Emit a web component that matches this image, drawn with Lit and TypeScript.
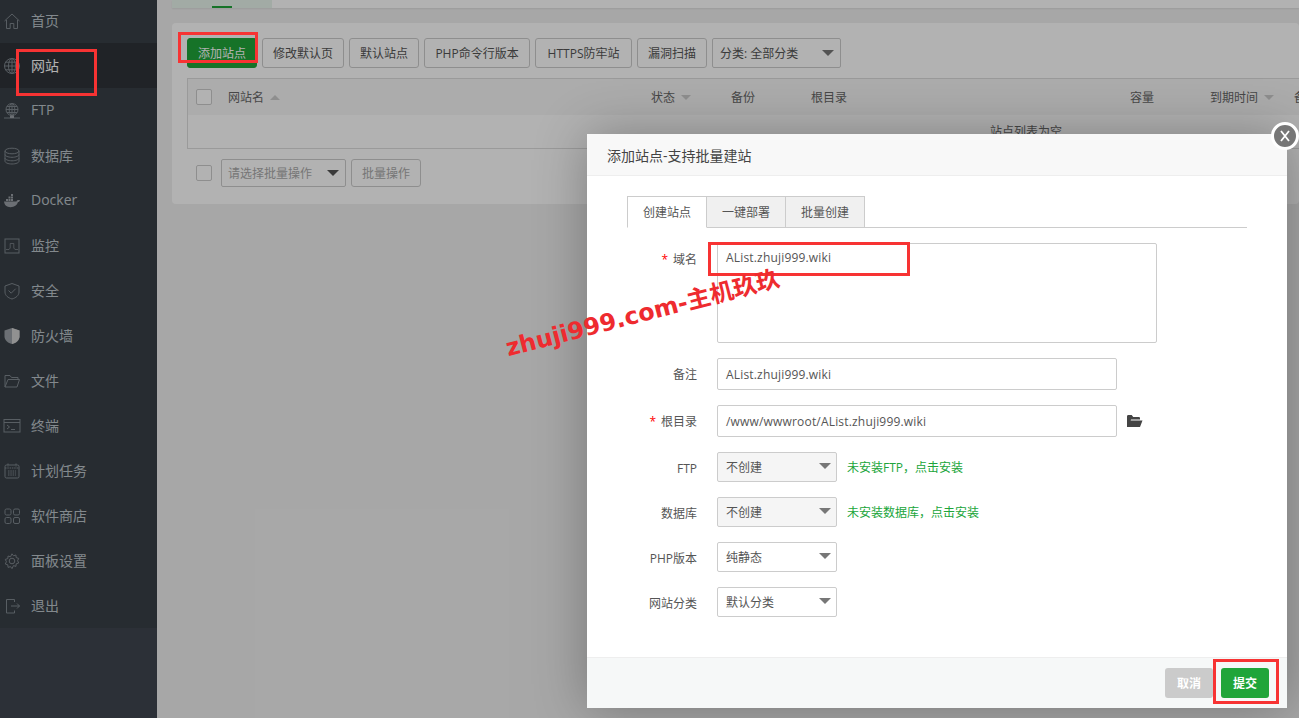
import { LitElement, html, css, svg } from "lit";
import { customElement } from "lit/decorators.js";

const ICONS: Record<string, unknown> = {
  home: svg`<path d="M1.5 9 9 2l7.5 7M3.5 8v8.5h3.7v-5h3.6v5h3.7V8"/>`,
  globe: svg`<circle cx="9" cy="9" r="7.5"/><ellipse cx="9" cy="9" rx="3.5" ry="7.5"/><path d="M1.5 9h15M2.6 5.2h12.8M2.6 12.8h12.8M9 1.5v15"/>`,
  ftp: svg`<circle cx="9" cy="7.5" r="6"/><ellipse cx="9" cy="7.5" rx="2.8" ry="6"/><path d="M3 7.5h12M4 4.5h10M4 10.5h10M9 1.5v12M1 16h16"/><rect x="7" y="13.5" width="4" height="2.5" class="fill"/>`,
  db: svg`<ellipse cx="9" cy="4" rx="7" ry="2.8"/><path d="M2 4v10.2c0 1.5 3.1 2.8 7 2.8s7-1.3 7-2.8V4M2 7.5c0 1.5 3.1 2.8 7 2.8s7-1.3 7-2.8M2 11c0 1.5 3.1 2.8 7 2.8s7-1.3 7-2.8"/>`,
  docker: svg`<g class="fill"><path d="M1 9.5h12.5c.6-1.3 1.7-1.7 3.5-1.3-.4 1-1 1.7-2 1.9-1 3.4-3.5 5.1-7.5 5.1-3.8 0-6-2-6.5-5.7z"/><rect x="3" y="7" width="2" height="2"/><rect x="5.5" y="7" width="2" height="2"/><rect x="8" y="7" width="2" height="2"/><rect x="5.5" y="4.5" width="2" height="2"/><rect x="8" y="4.5" width="2" height="2"/><rect x="8" y="2" width="2" height="2"/></g>`,
  monitor: svg`<rect x="2" y="2" width="14" height="14"/><path d="M3 12.5h3l1.2-1.5V6.5h3.6V11l1.2 1.5h3" stroke-width=".8"/>`,
  shield: svg`<path d="M9 1.5 16 4v6c0 3.5-3.2 5.9-7 7-3.8-1.1-7-3.500-7-7V4z"/><path d="m5.5 8.5 2.7 2.7 4.5-4.5"/>`,
  wall: svg`<path class="fill" d="M9 1 16.5 3.5V9.5c0 3.8-3.4 6.4-7.5 7.500-4.100-1.100-7.500-3.700-7.500-7.500V3.500z"/><path class="dark" d="M9 1 16.500 3.500V9.500c0 3.800-3.400 6.400-7.500 7.500z"/>`,
  folder: svg`<path d="M2 15V3.500h5l1.500 2H15v2M2 15l3-7.500h11.500L14 15z"/>`,
  term: svg`<rect x="1" y="2.500" width="16" height="12.500"/><path d="M1 5.500h16M4 8l2.500 2L4 12M8 12.500h4"/>`,
  cal: svg`<rect x="2" y="3" width="14" height="13" rx="1.500"/><path d="M5 1.500v3M13 1.500v3M2 6h14M5 9h8M5 11h8M5 13h8" stroke-dasharray="1.500 .8"/>`,
  grid: svg`<rect x="2" y="2" width="6" height="6" rx="1.500"/><rect x="10.500" y="2" width="6" height="6" rx="1.500"/><rect x="2" y="10.500" width="6" height="6" rx="1.500"/><rect x="10.500" y="10.500" width="6" height="6" rx="1.500"/>`,
  gear: svg`<circle cx="9" cy="9" r="2.800"/><path d="m9 1.800 1.500 2 2.400-.8.300 2.600 2.500.8-1.100 2.300 1.100 2.300-2.500.8-.3 2.600-2.400-.8L9 16.600l-1.500-2-2.400.8-.3-2.600-2.500-.8 1.100-2.300-1.100-2.300 2.500-.8.300-2.600 2.400.8z"/>`,
  exit: svg`<path d="M11.500 5V2.500h-8V16h8v-2.500M8 9h8.500M14 6.500 16.500 9 14 11.500"/>`,
};

const NAV = [
  ["home", "首页"], ["globe", "网站"], ["ftp", "FTP"], ["db", "数据库"], ["docker", "Docker"],
  ["monitor", "监控"], ["shield", "安全"], ["wall", "防火墙"], ["folder", "文件"], ["term", "终端"],
  ["cal", "计划任务"], ["grid", "软件商店"], ["gear", "面板设置"], ["exit", "退出"],
];

const TOOLBAR = ["修改默认页", "默认站点", "PHP命令行版本", "HTTPS防牢站", "漏洞扫描"];

@customElement("app-root")
export class AppRoot extends LitElement {
  static styles = css`
    :host { display: block; position: relative; height: 100vh; overflow: hidden; background: #f0f0f0;
      font-family: "Open Sans", "Noto Sans CJK SC", sans-serif; font-size: 12px; color: #555; }
    * { box-sizing: border-box; }
    .page { display: flex; height: 100%; }
    .side { width: 157px; flex: none; background: #3f4650; }
    .nav { margin-top: -2px; background: #394047; display: flex; flex-direction: column; }
    .item { height: 45px; display: flex; align-items: center; gap: 10px; padding-left: 3px;
      font-size: 14px; color: #bcc4ca; }
    .item span { margin-top: -2px; }
    .item.on { background: #2e3339; color: #fff; }
    .item svg { width: 18px; height: 18px; flex: none; fill: none; stroke: #7f878e; stroke-width: 1; }
    .item svg .fill { fill: #9aa0a6; stroke: none; }
    .item svg .dark { fill: #d0d0d0; stroke: none; }
    .main { flex: 1; min-width: 0; padding-left: 15px; overflow: hidden; }
    .top { height: 8px; background: #fff; display: flex; box-shadow: 0 1px 2px rgba(0,0,0,.08); }
    .top-tab { width: 100px; background: #e9f5ec; padding-left: 40px; display: flex; align-items: flex-end; }
    .top-tab i { display: block; width: 20px; height: 2px; background: #20a53a; }
    .card { margin-top: 15px; height: 181px; background: #fff; border-radius: 4px; padding: 15px; overflow: hidden; }
    .tools { display: flex; gap: 5px; height: 30px; }
    .btn { height: 30px; padding: 0 10px; border: 1px solid #ccc; border-radius: 3px; background: #fff; color: #555;
      display: flex; align-items: center; justify-content: center; white-space: nowrap; flex: none; }
    .btn.add { width: 70px; background: #20a53a; border-color: #20a53a; color: #fff; }
    .tools .btn:nth-child(4) { width: 106px; padding: 0; }
    .tools .btn:nth-child(5) { width: 97px; padding: 0; }
    .sel { position: relative; height: 30px; border: 1px solid #ccc; border-radius: 2px; background: #fff; color: #555;
      display: flex; align-items: center; padding-left: 8px; flex: none; }
    .sel::after { content: ""; position: absolute; right: 5px; top: 10px; border: 6px solid transparent;
      border-top-color: #777; border-bottom: 0; }
    .filter { width: 129px; padding-left: 7px; }
    .filter::after { top: 11px; right: 6px; }
    .table { margin-top: 10px; width: 1300px; height: 71px; border: 1px solid #ddd; }
    .thead { height: 36px; background: #f6f6f6; display: grid; align-items: center;
      grid-template-columns: 40px 423px 80px 80px 319px 80px 84px 40px; }
    .th { display: flex; align-items: center; gap: 6px; white-space: nowrap; color: #666; }
    .check { width: 16px; height: 16px; border: 1px solid #ccc; border-radius: 2px; background: #fff; margin-left: 8px; display: block; }
    .caret-up, .caret-down { display: block; width: 0; border: 5.5px solid transparent; }
    .caret-up { border-top: 0; border-bottom-color: #ccc; }
    .caret-down { border-bottom: 0; border-top-color: #ccc; }
    .empty { padding-top: 7px; padding-left: 802px; color: #666; white-space: nowrap; }
    .batch { margin-top: 10px; display: flex; align-items: center; height: 28px; }
    .batch .check { margin-left: 9px; }
    .batch .sel { height: 28px; width: 125px; margin-left: 9px; padding-left: 6px; color: #aaa; font-size: 12px; }
    .batch .sel::after { top: 10px; right: 6px; border-top-color: #555; }
    .batch .btn { height: 28px; width: 70px; margin-left: 5px; color: #aaa; padding: 0; }
    .shade { position: absolute; inset: 0; background: rgba(0,0,0,.3); }
    .modal { position: absolute; left: 587px; top: 134px; width: 700px; height: 574px; background: #fff;
      box-shadow: 1px 1px 50px rgba(0,0,0,.3); display: flex; flex-direction: column; color: #555; }
    .m-head { height: 42px; flex: none; background: #f8f8f8; border-bottom: 1px solid #eee; padding-left: 20px;
      display: flex; align-items: center; font-size: 14px; color: #444; }
    .close { position: absolute; right: -12px; top: -12px; width: 28px; height: 28px; border-radius: 50%;
      background: #777; border: 3px solid #fff; display: flex; align-items: center; justify-content: center; }
    .close svg { width: 12px; height: 14px; stroke: #fff; stroke-width: 1.8; fill: none; }
    .m-body { flex: 1; padding: 20px 40px 0; }
    .tabs { display: flex; height: 32px; border-bottom: 1px solid #ccc; width: 620px; }
    .tab { width: 79px; height: 32px; border: 1px solid #ccc; border-left: 0; background: #f0f0f0;
      display: flex; align-items: center; justify-content: center; color: #555; }
    .tab.on { width: 80px; border-left: 1px solid #ccc; background: #fff; border-bottom-color: #fff; }
    .form { margin-top: 15px; display: flex; flex-direction: column; gap: 15px; }
    .row { display: flex; align-items: center; }
    .row.top-align { align-items: flex-start; }
    .row.top-align .lab { padding-top: 7px; }
    .row.pick .lab { padding-top: 2px; }
    .lab { width: 70px; margin-right: 20px; text-align: right; white-space: nowrap; color: #555; }
    .lab em { color: #f00; font-style: normal; margin-right: 5px; }
    .inp { border: 1px solid #ccc; border-radius: 2px; padding-left: 8px; height: 32px; width: 400px;
      display: flex; align-items: center; color: #555; background: #fff; letter-spacing: .18px; }
    .area { width: 440px; height: 100px; align-items: flex-start; padding-top: 5px; }
    .row .sel { width: 120px; height: 30px; padding-left: 8px; }
    .row .sel.dis { background: #f5f5f5; }
    .folder { width: 17px; height: 14px; margin-left: 9px; fill: #444; }
    .hint { margin-left: 10px; color: #20a53a; }
    .m-foot { height: 51px; flex: none; background: #f6f8f8; border-top: 1px solid #eee; display: flex;
      justify-content: flex-end; align-items: center; gap: 8px; padding-right: 18px; }
    .act { width: 48px; height: 30px; border-radius: 3px; color: #fff; font-weight: 700; display: flex;
      align-items: center; justify-content: center; background: #cbcbcb; }
    .act.ok { background: #20a53a; }
    .mark { position: absolute; border: 3px solid #f73333; pointer-events: none; }
    .m1 { left: 16px; top: 49px; width: 81px; height: 47px; }
    .m2 { left: 178px; top: 32px; width: 80px; height: 31px; }
    .m3 { left: 708px; top: 242px; width: 202px; height: 34px; }
    .m4 { left: 1213px; top: 659px; width: 66px; height: 45px; }
    .water { position: absolute; left: 511px; top: 329px; transform-origin: 0 100%; transform: rotate(-14.5deg);
      color: #ee2b2f; font: 700 23.7px "DejaVu Sans", "Noto Sans CJK SC", sans-serif; white-space: nowrap; line-height: 38px; }
  `;

  private row(label: string, req: boolean, body: unknown, kind = "") {
    return html`<div class="row ${kind}">
      <div class="lab">${req ? html`<em>*</em>` : ""}${label}</div>${body}
    </div>`;
  }

  render() {
    return html`
      <div class="page">
        <aside class="side">
          <nav class="nav">
            ${NAV.map(([ic, t]) => html`<div class="item ${t === "网站" ? "on" : ""}">
              <svg viewBox="0 0 18 18">${ICONS[ic]}</svg><span>${t}</span></div>`)}
          </nav>
        </aside>
        <main class="main">
          <div class="top"><div class="top-tab"><i></i></div></div>
          <section class="card">
            <div class="tools">
              <div class="btn add">添加站点</div>
              ${TOOLBAR.map((t) => html`<div class="btn">${t}</div>`)}
              <div class="sel filter">分类: 全部分类</div>
            </div>
            <div class="table">
              <div class="thead">
                <span class="check"></span>
                <div class="th">网站名 <i class="caret-up"></i></div>
                <div class="th">状态 <i class="caret-down"></i></div>
                <div class="th">备份</div>
                <div class="th">根目录</div>
                <div class="th">容量</div>
                <div class="th">到期时间 <i class="caret-down"></i></div>
                <div class="th">备注</div>
              </div>
              <div class="empty">站点列表为空</div>
            </div>
            <div class="batch">
              <span class="check"></span>
              <div class="sel">请选择批量操作</div>
              <div class="btn">批量操作</div>
            </div>
          </section>
        </main>
      </div>
      <div class="shade"></div>
      <div class="modal">
        <div class="m-head">添加站点-支持批量建站</div>
        <div class="close"><svg viewBox="0 0 12 14"><path d="M2 2 10 12M10 2 2 12"/></svg></div>
        <div class="m-body">
          <div class="tabs">
            <div class="tab on">创建站点</div><div class="tab">一键部署</div><div class="tab">批量创建</div>
          </div>
          <div class="form">
            ${this.row("域名", true, html`<div class="inp area">AList.zhuji999.wiki</div>`, "top-align")}
            ${this.row("备注", false, html`<div class="inp">AList.zhuji999.wiki</div>`)}
            ${this.row("根目录", true, html`<div class="inp">/www/wwwroot/AList.zhuji999.wiki</div>
              <svg class="folder" viewBox="0 0 17 14"><path d="M1 13V2.5C1 1.7 1.5 1 2.3 1h3.4l1.5 2h5.500c.8 0 1.300.5 1.300 1.300V5.500H5L2.300 12.800 4.300 6.500h12.200L14 13z"/></svg>`)}
            ${this.row("FTP", false, html`<div class="sel dis">不创建</div><span class="hint">未安装FTP，点击安装</span>`, "pick")}
            ${this.row("数据库", false, html`<div class="sel dis">不创建</div><span class="hint">未安装数据库，点击安装</span>`, "pick")}
            ${this.row("PHP版本", false, html`<div class="sel">纯静态</div>`, "pick")}
            ${this.row("网站分类", false, html`<div class="sel">默认分类</div>`, "pick")}
          </div>
        </div>
        <div class="m-foot"><div class="act">取消</div><div class="act ok">提交</div></div>
      </div>
      <div class="mark m1"></div><div class="mark m2"></div><div class="mark m3"></div><div class="mark m4"></div>
      <div class="water">zhuji999.com-主机玖玖</div>
    `;
  }
}
